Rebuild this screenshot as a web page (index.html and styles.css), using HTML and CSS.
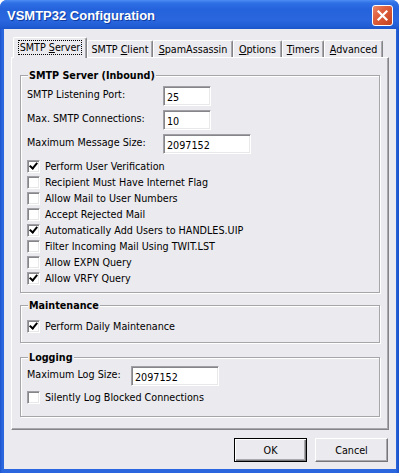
FILE: index.html
```html
<!DOCTYPE html>
<html>
<head>
  <title>VSMTP32 Configuration</title>
  <link rel="stylesheet" href="styles.css">
</head>
<body>
  <div class="window">
    <div class="titlebar">
      <span class="title">VSMTP32 Configuration</span>
      <div class="close">
        <svg width="13" height="13" viewBox="0 0 13 13">
          <path d="M2.5 2.5 L10.5 10.5 M10.5 2.5 L2.5 10.5" stroke="#fff" stroke-width="2.2" stroke-linecap="square"/>
        </svg>
      </div>
    </div>

    <div class="client">
      <div class="tabs">
        <div class="tab active tab-server"><span class="focus">SMTP <u>S</u>erver</span></div>
        <div class="tab tab-client">SMTP <u>C</u>lient</div>
        <div class="tab tab-spam"><u>S</u>pamAssassin</div>
        <div class="tab tab-options"><u>O</u>ptions</div>
        <div class="tab tab-timers"><u>T</u>imers</div>
        <div class="tab tab-advanced"><u>A</u>dvanced</div>
      </div>

      <div class="panel">
        <fieldset class="group group-server">
          <legend>SMTP Server (Inbound)</legend>
          <div class="field">
            <label>SMTP Listening Port:</label>
            <span class="edit short">25</span>
          </div>
          <div class="field">
            <label>Max. SMTP Connections:</label>
            <span class="edit short">10</span>
          </div>
          <div class="field">
            <label>Maximum Message Size:</label>
            <span class="edit long">2097152</span>
          </div>
          <div class="checks">
            <div class="check on"><span class="box"></span>Perform User Verification</div>
            <div class="check"><span class="box"></span>Recipient Must Have Internet Flag</div>
            <div class="check"><span class="box"></span>Allow Mail to User Numbers</div>
            <div class="check"><span class="box"></span>Accept Rejected Mail</div>
            <div class="check on"><span class="box"></span>Automatically Add Users to HANDLES.UIP</div>
            <div class="check"><span class="box"></span>Filter Incoming Mail Using TWIT.LST</div>
            <div class="check"><span class="box"></span>Allow EXPN Query</div>
            <div class="check on"><span class="box"></span>Allow VRFY Query</div>
          </div>
        </fieldset>

        <fieldset class="group group-maint">
          <legend>Maintenance</legend>
          <div class="check on"><span class="box"></span>Perform Daily Maintenance</div>
        </fieldset>

        <fieldset class="group group-log">
          <legend>Logging</legend>
          <div class="field field-log">
            <label>Maximum Log Size:</label>
            <span class="edit long">2097152</span>
          </div>
          <div class="check"><span class="box"></span>Silently Log Blocked Connections</div>
        </fieldset>
      </div>

      <div class="buttons">
        <div class="button default">OK</div>
        <div class="button">Cancel</div>
      </div>
    </div>
  </div>
</body>
</html>
```

FILE: styles.css
```css
body {
  margin: 0;
  background: #fff;
  font-family: 'DejaVu Sans Condensed', 'DejaVu Sans', sans-serif;
  font-stretch: condensed;
  font-size: 10.7px;
  line-height: 13px;
  color: #000;
}

.window {
  width: 399px;
  height: 473px;
  display: flex;
  flex-direction: column;
  background: linear-gradient(90deg, #1c53cc 0, #2a66de 2px, #2a66de 396px, #1a4fc6 399px);
  border-radius: 7px 7px 0 0;
  overflow: hidden;
}

/* title bar */
.titlebar {
  height: 29px;
  flex: none;
  display: flex;
  align-items: center;
  justify-content: space-between;
  padding: 0 6px 0 7px;
  background: linear-gradient(#4b8cf3 0, #2f70e6 3px, #2563dc 9px, #2a67de 20px, #2360d8 25px, #1c55cc 29px);
}

.title {
  color: #fff;
  font-family: 'Liberation Sans', Arial, sans-serif;
  font-stretch: normal;
  font-weight: bold;
  font-size: 13px;
  text-shadow: 1px 1px 0 #0f3a9e;
  margin-top: 1px;
}

.close {
  width: 19px;
  height: 19px;
  border: 1px solid #fff;
  border-radius: 3px;
  background: linear-gradient(135deg, #ea8a6a 0, #e06240 35%, #d2502c 70%, #c04020 100%);
  display: flex;
  align-items: center;
  justify-content: center;
  margin-top: 2px;
}

/* client area */
.client {
  flex: 1;
  margin: 0 3px 4px 4px;
  padding: 8px 7px 7px 7px;
  background: #ebeaee;
  display: flex;
  flex-direction: column;
}

.tabs {
  height: 20px;
  display: flex;
  align-items: flex-end;
  padding-left: 2px;
  position: relative;
  z-index: 1;
}

.tab {
  height: 17px;
  box-sizing: border-box;
  border-left: 1px solid #fff;
  border-top: 1px solid #fff;
  border-right: 1px solid #858489;
  box-shadow: inset -1px 0 0 #a9a8ac;
  border-radius: 2px 2px 0 0;
  text-align: center;
  padding-top: 2px;
}

.tab.active {
  height: 21px;
  margin-bottom: -1px;
  background: #ebeaee;
  padding-top: 3px;
}

.focus {
  display: inline-block;
  outline: 1px dotted #000;
  padding: 0 1px;
  line-height: 13px;
}

.tab-server { width: 74px; }
.tab-client { width: 66px; }
.tab-spam { width: 80px; }
.tab-options { width: 49px; }
.tab-timers { width: 42px; }
.tab-advanced { width: 59px; }

.panel {
  height: 373px;
  box-sizing: border-box;
  border-left: 1px solid #fff;
  border-top: 1px solid #fff;
  border-right: 1px solid #858489;
  border-bottom: 1px solid #858489;
  box-shadow: inset -1px -1px 0 #a9a8ac;
  padding: 11px 8px 0 8px;
}

/* group boxes */
.group {
  margin: 0;
  border: 1px solid #a6a5a9;
  box-shadow: inset 1px 1px 0 #fff, 1px 1px 0 #fff;
  padding: 0 6px 6px 6px;
}

.group legend {
  font-weight: bold;
  padding: 0 1px;
  margin-left: 1px;
  background: #ebeaee;
}

.group-server {
  padding-top: 4px;
  padding-bottom: 6px;
}

.group-maint {
  margin-top: 6px;
  padding-top: 6px;
  padding-bottom: 8px;
}

.group-log {
  margin-top: 8px;
  padding-top: 2px;
  padding-bottom: 11px;
}

.field {
  display: grid;
  grid-template-columns: 136px auto;
  align-items: start;
  margin-bottom: 4px;
}

.field label {
  padding-top: 2px;
}

.field-log {
  grid-template-columns: 104px auto;
  margin-bottom: 3px;
}

.edit {
  height: 20px;
  box-sizing: border-box;
  background: #fff;
  border: 1px solid;
  border-color: #a0a0a4 #fff #fff #a0a0a4;
  box-shadow: inset 1px 1px 0 #86858a, inset -1px -1px 0 #e8e7ea;
  padding: 4px 0 0 3px;
}

.edit.short { width: 48px; }
.edit.long { width: 88px; }

.checks {
  margin-top: 2px;
}

.check {
  height: 16px;
  display: flex;
  align-items: center;
}

.box {
  width: 13px;
  height: 13px;
  box-sizing: border-box;
  flex: none;
  margin-right: 5px;
  background: #fff;
  border: 1px solid;
  border-color: #a0a0a4 #fff #fff #a0a0a4;
  box-shadow: inset 1px 1px 0 #86858a, inset -1px -1px 0 #e8e7ea;
  position: relative;
}

.check.on .box::after {
  content: '';
  position: absolute;
  left: 3px;
  top: 0;
  width: 3px;
  height: 6px;
  border-right: 2px solid #000;
  border-bottom: 2px solid #000;
  transform: rotate(40deg);
}

/* buttons */
.buttons {
  margin-top: 8px;
  display: flex;
  justify-content: flex-end;
  gap: 8px;
  padding-right: 1px;
}

.button {
  width: 73px;
  height: 24px;
  box-sizing: border-box;
  display: flex;
  align-items: center;
  justify-content: center;
  border: 1px solid;
  border-color: #fff #76757a #76757a #fff;
  box-shadow: inset -1px -1px 0 #a9a8ac;
}

.button.default {
  border: 1px solid #000;
  box-shadow: inset 1px 1px 0 #fff, inset -1px -1px 0 #76757a, inset -2px -2px 0 #a9a8ac;
}
```
